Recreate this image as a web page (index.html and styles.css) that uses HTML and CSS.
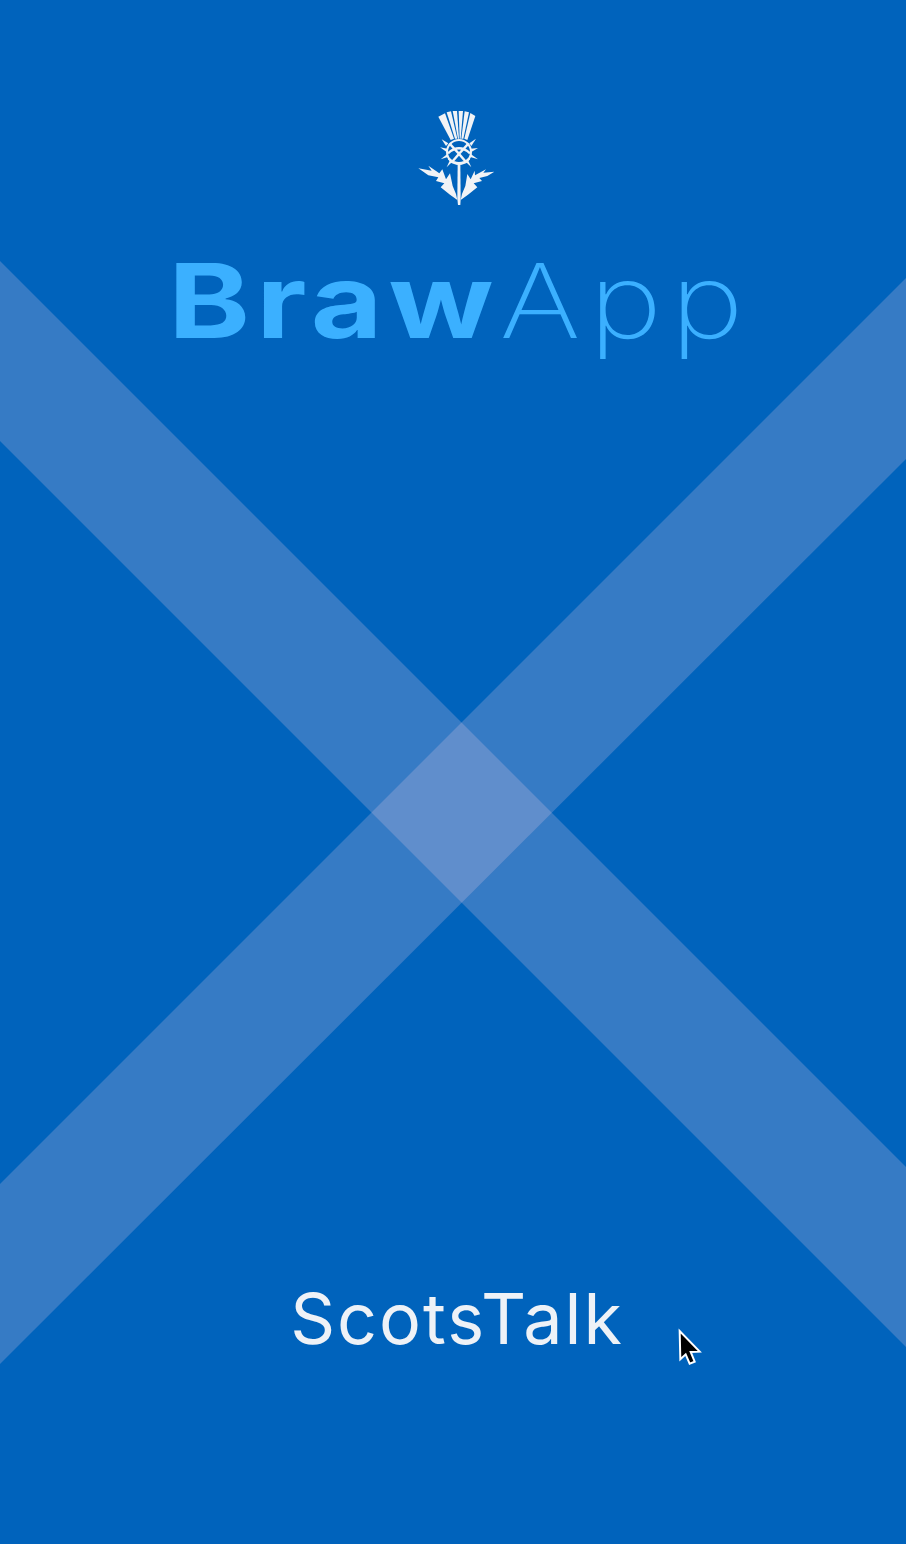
FILE: index.html
```html
<!DOCTYPE html>
<html lang="en">
<head>
    <meta charset="UTF-8">
    <meta name="viewport" content="width=device-width, initial-scale=1.0">
    <title>BrawApp</title>
    <link rel="stylesheet" href="styles.css">
</head>
<body>
    <div class="splash">
        <!-- saltire behind everything -->
        <svg class="saltire" viewBox="0 0 906 1544" aria-hidden="true">
            <polygon points="0,261 906,1167 906,1347 0,441"/>
            <polygon points="906,278 0,1184 0,1364 906,459"/>
        </svg>

        <header class="brand">
            <svg class="thistle" viewBox="0 0 330 345" aria-label="Thistle">
                <g class="petals">
                    <polygon points="115,50 135,40 162,116 152,120"/>
                    <polygon points="140,37 153,34 172,116 165,116"/>
                    <polygon points="158,33 171,33 177,116 174,116"/>
                    <polygon points="176,33 189,33 182,116 179,116"/>
                    <polygon points="194,34 207,37 190,116 184,116"/>
                    <polygon points="211,39 226,48 202,120 193,116"/>
                </g>
                <circle class="bulb" cx="177" cy="156" r="36"/>
                <path class="lattice" d="M148 130 Q172 155 200 188 M206 130 Q182 155 154 188 M144 160 Q177 130 210 160 M146 176 Q177 204 208 176"/>
                <g class="petals">
                    <polygon points="125,118 145,130 138,138"/>
                    <polygon points="120,142 142,146 140,156"/>
                    <polygon points="122,178 142,162 146,170"/>
                    <polygon points="140,202 150,180 156,186"/>
                    <polygon points="228,116 208,130 214,138"/>
                    <polygon points="234,144 212,146 214,156"/>
                    <polygon points="234,178 212,162 208,170"/>
                    <polygon points="214,202 204,180 198,186"/>
                    <polygon points="55,205 95,212 85,197 118,220 127,208 138,238 150,220 158,258 168,282 172,300 150,284 122,262 133,250 108,243 115,232 85,226"/>
                    <polygon points="283,215 250,218 258,208 225,226 224,212 212,238 202,222 196,258 186,282 182,300 204,284 232,262 221,250 246,243 238,234 262,228"/>
                    <polygon points="173,190 181,190 182,296 181,315 174,315 172,296"/>
                </g>
            </svg>
            <h1 class="title"><span class="title-bold">Braw</span><span class="title-light">App</span></h1>
        </header>

        <p class="tagline">ScotsTalk</p>

        <svg class="cursor" viewBox="0 0 150 165" aria-hidden="true">
            <polygon points="44,33 46,118 62,103 74,131 89,125 77,96 104,95"/>
        </svg>
    </div>
</body>
</html>
```

FILE: styles.css
```css
* {
    box-sizing: border-box;
}
body {
    margin: 0;
    padding: 0;
    background-color: #0063bc;
}
.splash {
    position: relative;
    display: flex;
    flex-direction: column;
    align-items: center;
    justify-content: space-between;
    width: 906px;
    height: 1544px;
    padding: 100px 0 176px;
    overflow: hidden;
}
.saltire {
    position: absolute;
    top: 0;
    left: 0;
    width: 906px;
    height: 1544px;
}
.saltire polygon {
    fill: #f5d0e6;
    fill-opacity: 0.22;
}
.brand {
    position: relative;
    display: flex;
    flex-direction: column;
    align-items: center;
}
.thistle {
    width: 110px;
    height: 115px;
    margin-left: 4px;
}
.petals polygon {
    fill: #f1f3f6;
}
.bulb {
    fill: #0063bc;
    stroke: #f1f3f6;
    stroke-width: 6;
}
.lattice {
    fill: none;
    stroke: #f1f3f6;
    stroke-width: 7;
}
.title {
    margin: 24px 0 0 14px;
    font-family: Inter, "Liberation Sans", sans-serif;
    font-size: 103px;
    line-height: 124px;
    font-weight: 400;
    color: #3bb0ff;
    white-space: nowrap;
    transform: scaleX(1.2);
}
.title-bold {
    font-weight: 700;
    letter-spacing: 5px;
}
.title-light {
    font-weight: 250;
    letter-spacing: 7px;
}
.tagline {
    position: relative;
    margin: 0 0 0 8px;
    font-family: Inter, "Noto Sans", sans-serif;
    font-size: 70px;
    line-height: 98px;
    font-weight: 400;
    letter-spacing: 2px;
    color: #eef2f7;
}
.cursor {
    position: absolute;
    left: 665px;
    top: 1320px;
    width: 50px;
    height: 55px;
}
.cursor polygon {
    fill: #000000;
    stroke: #ffffff;
    stroke-width: 6;
}
```
